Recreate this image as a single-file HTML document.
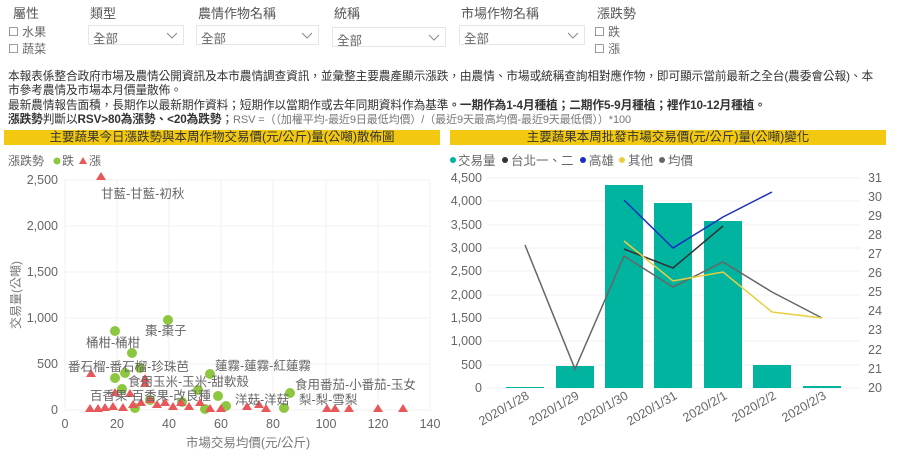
<!DOCTYPE html>
<html><head><meta charset="utf-8"><style>
body{margin:0;width:900px;height:460px;background:#fff;font-family:"Liberation Sans","Noto Sans CJK TC",sans-serif;color:#666;position:relative;overflow:hidden}
.a{position:absolute;white-space:nowrap}
.lab{font-size:13px;color:#555}
.dd{position:absolute;height:20px;border:1px solid #e6e6e6;font-size:12.5px;color:#666;box-sizing:border-box;padding:2px 4px}
.dd svg{position:absolute;right:5px;top:6px}
.cb{font-size:12px;color:#666}
.t{font-size:11.7px;color:#333;letter-spacing:-0.1px}
.bar{position:absolute;background:#F2C811;height:15px;font-size:12.5px;color:#333;text-align:center;line-height:15px}
</style></head><body>
<div class="a lab" style="left:13px;top:3px">屬性</div>
<div class="a cb" style="left:8px;top:23px">☐ 水果</div>
<div class="a cb" style="left:8px;top:40px">☐ 蔬菜</div>
<div class="a lab" style="left:90px;top:3px">類型</div>
<div class="dd" style="left:88px;top:25px;width:96px">全部<svg width="12" height="7"><path d="M1 1l5 5 5-5" fill="none" stroke="#888"/></svg></div>
<div class="a lab" style="left:198px;top:3px">農情作物名稱</div>
<div class="dd" style="left:196px;top:25px;width:123px">全部<svg width="12" height="7"><path d="M1 1l5 5 5-5" fill="none" stroke="#888"/></svg></div>
<div class="a lab" style="left:334px;top:3px">統稱</div>
<div class="dd" style="left:332px;top:27px;width:114px">全部<svg width="12" height="7"><path d="M1 1l5 5 5-5" fill="none" stroke="#888"/></svg></div>
<div class="a lab" style="left:461px;top:3px">市場作物名稱</div>
<div class="dd" style="left:459px;top:25px;width:126px">全部<svg width="12" height="7"><path d="M1 1l5 5 5-5" fill="none" stroke="#888"/></svg></div>
<div class="a lab" style="left:597px;top:3px">漲跌勢</div>
<div class="a cb" style="left:594px;top:23px">☐ 跌</div>
<div class="a cb" style="left:594px;top:40px">☐ 漲</div>
<div class="a t" style="left:8px;top:67px">本報表係整合政府市場及農情公開資訊及本市農情調查資訊，並彙整主要農產顯示漲跌，由農情、市場或統稱查詢相對應作物，即可顯示當前最新之全台(農委會公報)、本</div>
<div class="a t" style="left:8px;top:81px">市參考農情及市場本月價量散佈。</div>
<div class="a t" style="left:8px;top:96px">最新農情報告面積，長期作以最新期作資料；短期作以當期作或去年同期資料作為基準<b>。一期作為1-4月種植；二期作5-9月種植；裡作10-12月種植。</b></div>
<div class="a t" style="left:8px;top:110px"><b>漲跌勢</b>判斷以<b>RSV&gt;80為漲勢、&lt;20為跌勢</b>；<span style="color:#777;font-size:11px">RSV =（（加權平均-最近9日最低均價）/（最近9天最高均價-最近9天最低價））*100</span></div>
<div class="bar" style="left:4px;top:130px;width:436px">主要蔬果今日漲跌勢與本周作物交易價(元/公斤)量(公噸)散佈圖</div>
<div class="bar" style="left:450px;top:130px;width:436px">主要蔬果本周批發市場交易價(元/公斤)量(公噸)變化</div>
<svg class="a" style="left:0;top:0" width="900" height="460" font-family="Liberation Sans,Noto Sans CJK TC,sans-serif">
<g stroke="#f0f0f0" stroke-width="1">
<line x1="65" y1="180" x2="430" y2="180"/><line x1="65" y1="226" x2="430" y2="226"/><line x1="65" y1="272" x2="430" y2="272"/><line x1="65" y1="318" x2="430" y2="318"/><line x1="65" y1="364" x2="430" y2="364"/><line x1="65" y1="410" x2="430" y2="410"/>
<line x1="65" y1="180" x2="65" y2="410"/><line x1="117" y1="180" x2="117" y2="410"/><line x1="169" y1="180" x2="169" y2="410"/><line x1="221" y1="180" x2="221" y2="410"/><line x1="273" y1="180" x2="273" y2="410"/><line x1="326" y1="180" x2="326" y2="410"/><line x1="378" y1="180" x2="378" y2="410"/><line x1="430" y1="180" x2="430" y2="410"/>
</g>
<g font-size="12.5" fill="#666" text-anchor="end">
<text x="58" y="184">2,500</text><text x="58" y="230">2,000</text><text x="58" y="276">1,500</text><text x="58" y="322">1,000</text><text x="58" y="368">500</text><text x="58" y="414">0</text>
</g>
<g font-size="12.5" fill="#666" text-anchor="middle">
<text x="65" y="428">0</text><text x="117" y="428">20</text><text x="169" y="428">40</text><text x="221" y="428">60</text><text x="273" y="428">80</text><text x="326" y="428">100</text><text x="378" y="428">120</text><text x="430" y="428">140</text>
<text x="248" y="447" fill="#777">市場交易均價(元/公斤)</text>
</g>
<text transform="translate(20,295) rotate(-90)" font-size="12" fill="#777" text-anchor="middle">交易量(公噸)</text>
<text x="8" y="165" font-size="12" fill="#666">漲跌勢</text>
<circle cx="57" cy="161" r="3.5" fill="#8DC63F"/><text x="62" y="165" font-size="12" fill="#666">跌</text>
<path d="M79 164l4-7 4 7z" fill="#E8585A"/><text x="89" y="165" font-size="12" fill="#666">漲</text>
<g fill="#8DC63F">
<circle cx="115" cy="331" r="5"/><circle cx="168" cy="320" r="5"/><circle cx="132" cy="353" r="5"/><circle cx="115" cy="378" r="5"/><circle cx="125" cy="373" r="5"/><circle cx="140" cy="368" r="5"/><circle cx="122" cy="389" r="5"/><circle cx="210" cy="374" r="5"/><circle cx="198" cy="390" r="5"/><circle cx="218" cy="396" r="5"/><circle cx="290" cy="393" r="5"/><circle cx="284" cy="408" r="5"/><circle cx="226" cy="406" r="5"/><circle cx="182" cy="402" r="5"/><circle cx="150" cy="400" r="5"/><circle cx="205" cy="409" r="5"/><circle cx="135" cy="408" r="5"/>
</g>
<g fill="#E8585A">
<path d="M96 180l5-8 5 8z"/><path d="M86 377l5-8 5 8z"/><path d="M110 396l5-8 5 8z"/><path d="M140 387l5-8 5 8z"/><path d="M125 397l5-8 5 8z"/><path d="M140 382l5-8 5 8z"/>
<path d="M85 412l5-8 5 8z"/><path d="M93 412l5-8 5 8z"/><path d="M100 411l5-8 5 8z"/><path d="M108 410l5-8 5 8z"/><path d="M118 411l5-8 5 8z"/><path d="M128 408l5-8 5 8z"/><path d="M136 406l5-8 5 8z"/><path d="M145 403l5-8 5 8z"/><path d="M152 408l5-8 5 8z"/><path d="M160 406l5-8 5 8z"/><path d="M168 410l5-8 5 8z"/><path d="M176 406l5-8 5 8z"/><path d="M184 410l5-8 5 8z"/><path d="M195 406l5-8 5 8z"/><path d="M205 412l5-8 5 8z"/><path d="M216 412l5-8 5 8z"/><path d="M242 410l5-8 5 8z"/><path d="M254 408l5-8 5 8z"/><path d="M261 412l5-8 5 8z"/><path d="M322 412l5-8 5 8z"/><path d="M344 412l5-8 5 8z"/><path d="M373 412l5-8 5 8z"/><path d="M398 412l5-8 5 8z"/><path d="M330 412l5-8 5 8z"/>
</g>
<g font-size="12.5" fill="#666">
<text x="101" y="198">甘藍-甘藍-初秋</text><text x="145" y="335">棗-棗子</text><text x="86" y="347">桶柑-桶柑</text>
<text x="68" y="371">番石榴-番石榴-珍珠芭</text><text x="215" y="370">蓮霧-蓮霧-紅蓮霧</text><text x="128" y="386">食用玉米-玉米-甜軟殼</text>
<text x="90" y="400">百香果-百香果-改良種</text><text x="295" y="389">食用番茄-小番茄-玉女</text><text x="235" y="404">洋菇-洋菇</text><text x="299" y="404">梨-梨-雪梨</text>
</g>
<g stroke="#f0f0f0"><line x1="487" y1="178" x2="860" y2="178"/><line x1="487" y1="201" x2="860" y2="201"/><line x1="487" y1="225" x2="860" y2="225"/><line x1="487" y1="248" x2="860" y2="248"/><line x1="487" y1="271" x2="860" y2="271"/><line x1="487" y1="295" x2="860" y2="295"/><line x1="487" y1="318" x2="860" y2="318"/><line x1="487" y1="341" x2="860" y2="341"/><line x1="487" y1="365" x2="860" y2="365"/><line x1="487" y1="388" x2="860" y2="388"/></g>
<g font-size="12.5" fill="#666" text-anchor="end">
<text x="482" y="182">4,500</text><text x="482" y="205">4,000</text><text x="482" y="229">3,500</text><text x="482" y="252">3,000</text><text x="482" y="275">2,500</text><text x="482" y="299">2,000</text><text x="482" y="322">1,500</text><text x="482" y="345">1,000</text><text x="482" y="369">500</text><text x="482" y="392">0</text>
</g>
<g font-size="12.5" fill="#666">
<text x="868" y="182">31</text><text x="868" y="201">30</text><text x="868" y="220">29</text><text x="868" y="239">28</text><text x="868" y="258">27</text><text x="868" y="277">26</text><text x="868" y="296">25</text><text x="868" y="315">24</text><text x="868" y="334">23</text><text x="868" y="354">22</text><text x="868" y="373">21</text><text x="868" y="392">20</text>
</g>
<g fill="#00B4A0">
<rect x="506" y="387" width="38" height="1"/><rect x="556" y="366" width="38" height="22"/><rect x="605" y="185" width="38" height="203"/><rect x="654" y="203" width="38" height="185"/><rect x="704" y="221" width="38" height="167"/><rect x="753" y="365" width="38" height="23"/><rect x="803" y="386" width="38" height="2"/>
</g>
<g fill="none" stroke-width="1.5">
<polyline points="525,245 575,369 624,256 673,287 723,262 772,292 822,318" stroke="#666"/>
<polyline points="624,249 673,268 723,226" stroke="#333"/>
<polyline points="624,200 673,248 723,217 772,192" stroke="#1a2fbf"/>
<polyline points="624,241 673,281 723,272 772,312 822,318" stroke="#E8CF3F"/>
</g>
<g font-size="12.5" fill="#666">
<circle cx="453" cy="160" r="3" fill="#00B4A0"/><text x="458" y="165">交易量</text>
<circle cx="505" cy="160" r="3" fill="#333"/><text x="511" y="165">台北一、二</text>
<circle cx="583" cy="160" r="3" fill="#1a2fbf"/><text x="589" y="165">高雄</text>
<circle cx="622" cy="160" r="3" fill="#E8CF3F"/><text x="628" y="165">其他</text>
<circle cx="662" cy="160" r="3" fill="#666"/><text x="668" y="165">均價</text>
</g>
<g font-size="12.5" fill="#666" text-anchor="end">
<text transform="translate(530,398) rotate(-30)">2020/1/28</text><text transform="translate(580,398) rotate(-30)">2020/1/29</text><text transform="translate(629,398) rotate(-30)">2020/1/30</text><text transform="translate(678,398) rotate(-30)">2020/1/31</text><text transform="translate(728,398) rotate(-30)">2020/2/1</text><text transform="translate(777,398) rotate(-30)">2020/2/2</text><text transform="translate(827,398) rotate(-30)">2020/2/3</text>
</g>
</svg>
</body></html>
